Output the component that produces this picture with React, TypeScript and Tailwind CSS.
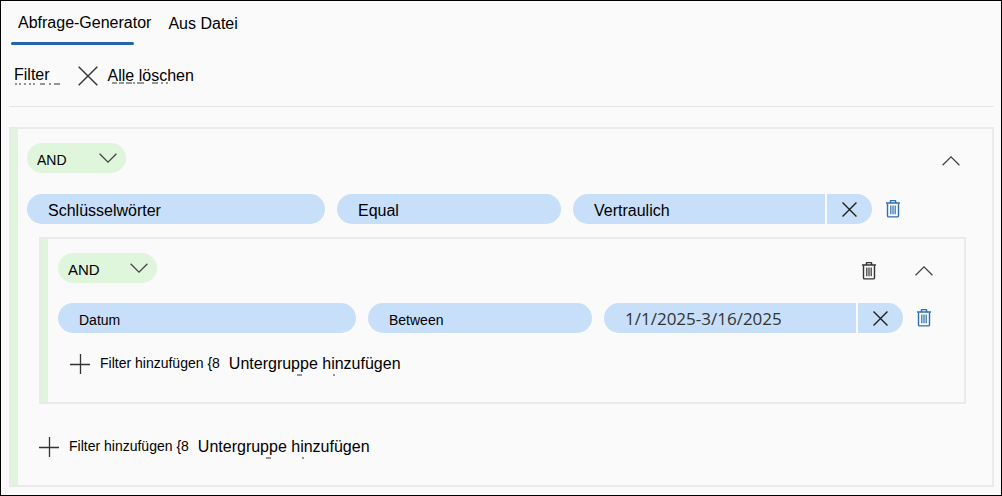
import type { ReactNode } from "react";

const fieldBase = "h-[30px] min-w-0 appearance-none bg-[#c7dff9] pl-[21px] outline-none";

function TrashIcon({ className }: { className: string }) {
  return (
    <svg viewBox="0 0 14 18" className={`h-[18px] w-[14px] ${className}`} fill="none" stroke="currentColor" aria-hidden="true">
      <path d="M0 3h14" strokeWidth="1.5" />
      <path d="M4.4 3V1.6q0-1 1-1h3.2q1 0 1 1V3" strokeWidth="1.5" />
      <path d="M1.5 3.5v12.2q0 1.2 1.2 1.2h8.6q1.2 0 1.2-1.2V3.5" strokeWidth="1.4" />
      <path d="M4.8 5.6v8.6M7 5.6v8.6M9.2 5.6v8.6" strokeWidth="1.2" />
    </svg>
  );
}

function CrossIcon({ className }: { className: string }) {
  return (
    <svg viewBox="0 0 20 20" className={className} fill="none" stroke="currentColor" aria-hidden="true">
      <path d="M.7.7l18.6 18.6M19.3.7L.7 19.3" vectorEffect="non-scaling-stroke" strokeWidth="1.4" />
    </svg>
  );
}

function Chevron({ className }: { className: string }) {
  return (
    <svg viewBox="0 0 18 10" className={`h-[10px] w-[18px] text-[#444] ${className}`} fill="none" stroke="currentColor" aria-hidden="true">
      <path d="M.6.8L9 9.1 17.4.8" strokeWidth="1.3" />
    </svg>
  );
}

function PlusIcon() {
  return (
    <svg viewBox="0 0 20 20" className="size-5 shrink-0 text-[#333]" fill="none" stroke="currentColor" aria-hidden="true">
      <path d="M10.5 0v20M0 10.5h20" strokeWidth="1.3" />
    </svg>
  );
}

/* Row of small dashes drawn just below a label. */
function Dashes({ d, className }: { d: string; className: string }) {
  return (
    <svg viewBox="0 0 90 2" className={`pointer-events-none absolute h-[2px] w-[90px] ${className}`} fill="none" stroke="#333" aria-hidden="true">
      <path d={d} strokeWidth="1.2" />
    </svg>
  );
}

function LogicSelect({ size }: { size: string }) {
  return (
    <div className="relative w-[99px]">
      <select aria-label="AND" className={`block h-[30px] w-full appearance-none rounded-full bg-[#dff5dc] pl-[10px] outline-none ${size}`}>
        <option>AND</option>
      </select>
      <Chevron className="pointer-events-none absolute right-[9px] top-[10px]" />
    </div>
  );
}

type RowProps = { field: string; operator: string; value: string; size: string; valueStyle: string };

function FilterRow({ field, operator, value, size, valueStyle }: RowProps) {
  return (
    <div className="flex items-center">
      <div className="grid grow grid-cols-[298fr_224fr_299fr] gap-3">
        <select aria-label={field} className={`${fieldBase} rounded-full ${size}`}>
          <option>{field}</option>
        </select>
        <select aria-label={operator} className={`${fieldBase} rounded-full ${size}`}>
          <option>{operator}</option>
        </select>
        <div className="flex min-w-0 gap-[2px]">
          <input aria-label={value} defaultValue={value} className={`${fieldBase} w-0 grow rounded-l-full ${valueStyle}`} />
          <button aria-label={`${value} ×`} className="flex h-[30px] w-[45px] items-center justify-center rounded-r-full bg-[#c7dff9] text-[#222]">
            <CrossIcon className="size-[15px]" />
          </button>
        </div>
      </div>
      <button aria-label={field} className="ml-[14px]">
        <TrashIcon className="text-[#2f6eae]" />
      </button>
    </div>
  );
}

function AddActions() {
  return (
    <div className="flex items-center">
      <PlusIcon />
      <button className="ml-[10px] pb-[2px] text-[14px] leading-5">{"Filter hinzufügen {8"}</button>
      <button className="relative ml-[9px] pb-px text-[16px] leading-5">
        Untergruppe hinzufügen
        <Dashes d="M0 1h5M36 1h2" className="-bottom-px left-[68px]" />
      </button>
    </div>
  );
}

function Group({ children, className }: { children: ReactNode; className: string }) {
  return (
    <section className="flex border-2 border-[#eaeaea]">
      <div className="w-[7px] shrink-0 bg-[#dff5dc]" />
      <div className={`min-w-0 grow ${className}`}>{children}</div>
    </section>
  );
}

export default function App() {
  return (
    <main className="min-h-screen border border-black bg-[#fafafa] pb-2 pl-2 pr-[7px] font-['Liberation_Sans',Arial,sans-serif] text-black">
      <nav className="flex h-[44px] pl-[9px] pt-[12px] text-[16px] leading-5" role="tablist">
        <button role="tab" aria-selected="true" className="relative flex h-8 items-start">
          Abfrage-Generator
          <span className="absolute -left-[7px] bottom-0 h-[3px] w-[123px] rounded-full bg-[#2563ab]" />
        </button>
        <button role="tab" aria-selected="false" className="ml-[17px] flex h-8 items-start pt-px">
          Aus Datei
        </button>
      </nav>

      <header className="flex h-[62px] items-center border-b border-[#e5e5e5] pl-[5px] text-[16px] leading-5">
        <h1 className="relative pb-[2px]">
          Filter
          <Dashes d="M1 1h2M5 1h2M10 1h2M15 1h2M19 1h2M26 1h5M35 1h2M40 1h6" className="bottom-[2px] left-0" />
        </h1>
        <button className="ml-[28px] flex items-center gap-[10px]">
          <CrossIcon className="size-5 text-[#333]" />
          <span className="relative pt-px">
            Alle löschen
            <Dashes d="M4 1h5M11 1h5M18 1h6M25 1h2M29 1h7M44 1h6M53 1h2M58 1h2" className="bottom-[2px] left-0" />
          </span>
        </button>
      </header>

      <div className="pt-5">
        <Group className="pb-[27px] pl-[9px] pt-[14px]">
          <div className="flex items-center justify-between pr-[32px]">
            <LogicSelect size="pt-[4px] text-[14px]" />
            <button aria-label="AND" className="mt-[5px]">
              <Chevron className="rotate-180" />
            </button>
          </div>
          <div className="pr-[92px] pt-[21px]">
            <FilterRow field="Schlüsselwörter" operator="Equal" value="Vertraulich" size="pt-[3px] text-[16px]" valueStyle="pt-[4px] text-[16px]" />
          </div>
          <div className="pl-3 pr-[26px] pt-[13px]">
            <Group className="pb-[27px] pl-[10px] pt-[14px]">
              <div className="flex items-center pr-[31px]">
                <LogicSelect size="pt-[5px] text-[15px]" />
                <button aria-label="AND" className="ml-auto mt-[5px]">
                  <TrashIcon className="text-[#333]" />
                </button>
                <button aria-label="AND" className="ml-[39px] mt-[5px]">
                  <Chevron className="rotate-180" />
                </button>
              </div>
              <div className="pr-[33px] pt-5">
                <FilterRow
                  field="Datum"
                  operator="Between"
                  value="1/1/2025-3/16/2025"
                  size="pt-[5px] text-[14px]"
                  valueStyle="pt-[1px] font-['Open_Sans','Noto_Sans',sans-serif] text-[17px] text-[#333]"
                />
              </div>
              <div className="pl-3 pt-5">
                <AddActions />
              </div>
            </Group>
          </div>
          <div className="pl-3 pt-8">
            <AddActions />
          </div>
        </Group>
      </div>
    </main>
  );
}
